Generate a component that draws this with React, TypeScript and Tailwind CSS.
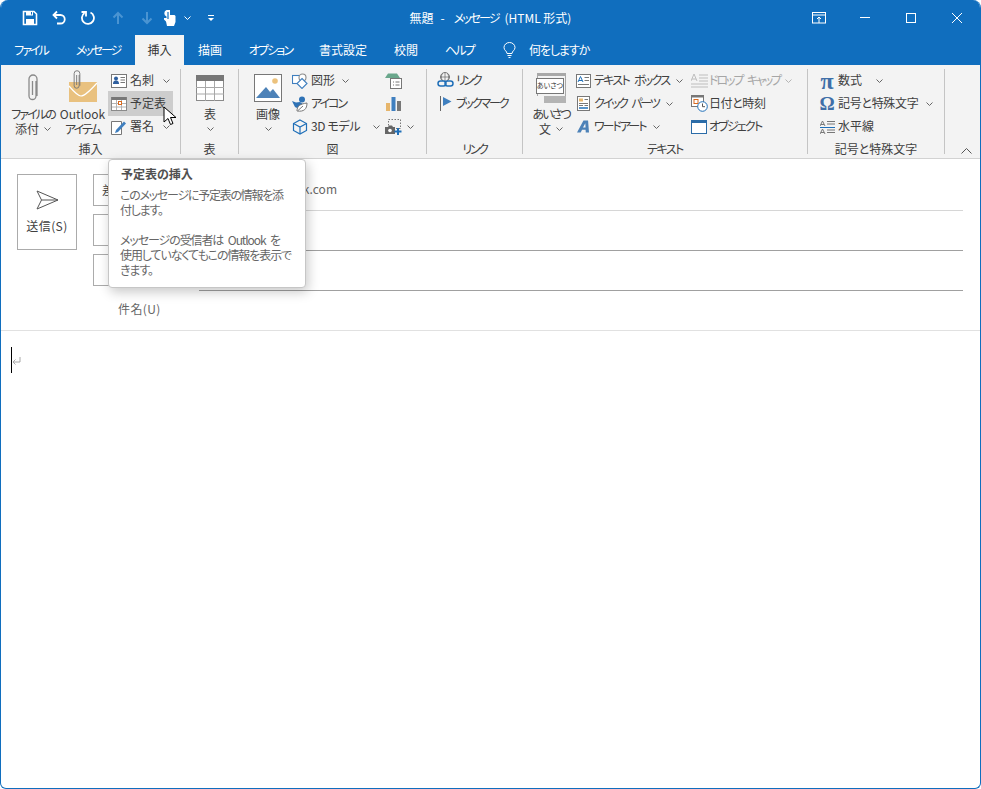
import type { ReactNode } from 'react'

const BLUE = '#106ebe'

function Chevron({ color = '#666' }: { color?: string }) {
  return (
    <svg width="7" height="4" viewBox="0 0 7 4" className="shrink-0">
      <path d="M.5.5 3.5 3.5 6.5.5" fill="none" stroke={color} />
    </svg>
  )
}

// the CJK font's kana run wider than the ribbon's, so they get pulled in
function Kana({ children }: { children: ReactNode }) {
  return <span className="tracking-[-1.9px]">{children}</span>
}

// quick access toolbar icons
function SaveIcon() {
  return (
    <svg width="16" height="16" viewBox="0 0 16 16">
      <path d="M1.5 1.5h10.5l2.5 2.5v10.500h-13z" fill="none" stroke="#fff" strokeWidth="1.6" />
      <rect x="4" y="1.500" width="7" height="4" fill="#fff" />
      <rect x="4" y="9" width="8" height="5" fill="#fff" />
      <rect x="9" y="2" width="1" height="2.500" fill={BLUE} />
    </svg>
  )
}

function UndoIcon() {
  return (
    <svg width="16" height="16" viewBox="0 0 16 16" fill="none" stroke="#fff" strokeWidth="1.8">
      <path d="M6 1.500 2.500 5 6 8.500" />
      <path d="M3 5h6.500a4 4 0 0 1 0 8.500H6" />
    </svg>
  )
}

function RedoIcon() {
  return (
    <svg width="14" height="15" viewBox="0 0 14 15" fill="none" stroke="#fff" strokeWidth="1.8">
      <path d="M3.500 3a6 6 0 1 0 6-.5" />
      <path d="M.5 2h4.500v4.500" />
    </svg>
  )
}

function ArrowIcon({ down }: { down?: boolean }) {
  return (
    <svg width="12" height="14" viewBox="0 0 12 14" fill="none" stroke="#4a94d2" strokeWidth="2" className={down ? 'rotate-180' : ''}>
      <path d="M6 13V2M1.500 6.500 6 2l4.500 4.500" />
    </svg>
  )
}

function TouchIcon() {
  return (
    <svg width="13" height="18" viewBox="0 0 13 18">
      <path d="M3.500 1h3.500v5h4.500l1 1v6l-1.500 4h-7l-1-4.500-2-2V9h2.500V7.500a3.500 3.500 0 0 1 0-6.500z" fill="#fff" />
      <path d="M5 3v7" stroke={BLUE} strokeWidth="1.200" />
    </svg>
  )
}

// ribbon icons
function ClipIcon({ w = 14, h = 28, color = '#8a8a8a' }: { w?: number; h?: number; color?: string }) {
  return (
    <svg width={w} height={h} viewBox="0 0 14 28" fill="none" stroke={color} strokeWidth="1.300">
      <path d="M10 7v15a3.500 3.500 0 0 1-7 0V5a3.800 3.800 0 0 1 8 0v17" />
      <path d="M6.500 7v14" />
    </svg>
  )
}

function EnvelopeIcon() {
  return (
    <div className="relative w-[29px] h-[28px]">
      <svg width="29" height="28" viewBox="0 0 29 28" className="absolute left-0 top-0">
        <rect x="1" y="8" width="28" height="21" fill="#e9c17f" />
        <path d="M1 12c6 7 9 10 12 10s8-4 16-13" fill="none" stroke="#fff" strokeWidth="1.200" />
      </svg>
      <div className="absolute left-[4px] top-[-4px]">
        <ClipIcon w={10} h={20} color="#777" />
      </div>
    </div>
  )
}

function CardIcon() {
  return (
    <svg width="16" height="14" viewBox="0 0 16 14">
      <rect x=".5" y=".5" width="15" height="13" fill="#fff" stroke="#777" />
      <circle cx="5" cy="4.500" r="2" fill="#2f5f9e" />
      <path d="M2 10c0-3 1.500-3.500 3-3.500S8 7 8 10z" fill="#2f5f9e" />
      <path d="M9.500 3.500h4.500M9.500 6h4.500M9.500 8.500h4.500" stroke="#777" />
    </svg>
  )
}

function CalendarIcon() {
  return (
    <svg width="16" height="15" viewBox="0 0 16 15">
      <rect x=".5" y="1.500" width="15" height="13" fill="#fff" stroke="#8a8a8a" />
      <rect x=".5" y="1" width="15" height="3" fill="#777" />
      <path d="M5.500 4v10M10.500 4v10M1 7.500h14M1 11h14" stroke="#b4b4b4" />
      <rect x="7.500" y="5.500" width="3" height="3" fill="#fff" stroke="#d9691e" />
    </svg>
  )
}

function SignIcon() {
  return (
    <svg width="16" height="16" viewBox="0 0 16 16">
      <path d="M.5 2.500h10v13H.5z" fill="#fff" stroke="#777" />
      <path d="M5 11 13 2.500l2 2-8 8.500-3 1z" fill="#3f7fbf" />
    </svg>
  )
}

function TableIcon() {
  return (
    <svg width="28" height="26" viewBox="0 0 28 26">
      <rect x=".5" y=".5" width="27" height="25" fill="#fff" stroke="#8a8a8a" />
      <rect x="0" y="0" width="28" height="6" fill="#777" />
      <path d="M9.500 6v20M18.500 6v20M0 12.500h28M0 19h28" stroke="#a8a8a8" />
    </svg>
  )
}

function PictureIcon() {
  return (
    <svg width="28" height="28" viewBox="0 0 28 28">
      <rect x=".5" y=".5" width="27" height="27" fill="#fff" stroke="#777" />
      <circle cx="21" cy="7" r="2.800" fill="#ecc27d" />
      <path d="M2 24 12 13l9 11z" fill="#4d82b8" />
      <path d="m16 18 3-3 7 9h-7z" fill="#4d82b8" />
    </svg>
  )
}

function ShapesIcon() {
  return (
    <svg width="16" height="16" viewBox="0 0 16 16" fill="#fff" strokeWidth="1.100">
      <rect x=".5" y="2.500" width="9" height="8" stroke="#3f7fbf" />
      <circle cx="10.500" cy="4.500" r="3.500" stroke="#8a8a8a" />
      <path d="m10 5.500 5 5-5 5-5-5z" stroke="#3f7fbf" />
    </svg>
  )
}

function BirdIcon() {
  return (
    <svg width="16" height="16" viewBox="0 0 16 16">
      <circle cx="10" cy="3.500" r="3" fill="#2f72b5" />
      <path d="M0 5l4 1.500L8 6l3 2-4 5-4-2z" fill="#2f72b5" />
      <path d="M5 15c0-5 3-7 10-8 0 6-3 9-10 8z" fill="#fff" stroke="#777" />
      <path d="M6 14.500 11 10" stroke="#777" />
    </svg>
  )
}

function CubeIcon() {
  return (
    <svg width="16" height="16" viewBox="0 0 16 16" fill="none" stroke="#1f6fb8" strokeWidth="1.200">
      <path d="M8 1 14.500 4.500v7L8 15l-6.500-3.500v-7z" />
      <path d="M1.500 4.500 8 8l6.500-3.500M8 8v7" />
    </svg>
  )
}

function SmartArtIcon() {
  return (
    <svg width="17" height="16" viewBox="0 0 17 16">
      <path d="M0 5 3 .5h9l3 4.500z" fill="#6aa78c" />
      <rect x="5.500" y="5.500" width="11" height="10" fill="#fff" stroke="#777" />
      <path d="M8 9h1M8 12h1M10.500 9h4M10.500 12h4" stroke="#777" />
    </svg>
  )
}

function ChartIcon() {
  return (
    <svg width="15" height="14" viewBox="0 0 15 14">
      <rect x="0" y="6" width="4" height="8" fill="#e6b56b" />
      <rect x="5.500" y="0" width="4" height="14" fill="#3f7fbf" />
      <rect x="11" y="4" width="4" height="10" fill="#777" />
    </svg>
  )
}

function ScreenshotIcon() {
  return (
    <svg width="17" height="16" viewBox="0 0 17 16">
      <rect x="3.500" y=".5" width="12" height="9" fill="none" stroke="#777" strokeDasharray="1.500 1.500" />
      <path d="M0 8h3l1-1.500h3L8 8h2v7H0z" fill="#666" />
      <circle cx="5" cy="11.500" r="1.800" fill="#fff" />
      <path d="M13 9v7M9.500 12.500h7" stroke="#1f6fb8" strokeWidth="2" />
    </svg>
  )
}

function LinkIcon() {
  return (
    <svg width="17" height="17" viewBox="0 0 17 17" fill="none">
      <circle cx="8" cy="5" r="4.500" stroke="#777" />
      <path d="M3.500 5h9M8 .5v9M5.500 1.500c-1.500 2-1.500 5 0 7M10.500 1.500c1.500 2 1.500 5 0 7" stroke="#777" strokeWidth=".8" />
      <rect x="1" y="9" width="8" height="5" rx="2.500" stroke="#1f6fb8" strokeWidth="1.500" fill="#f3f3f3" />
      <rect x="8" y="9" width="8" height="5" rx="2.500" stroke="#1f6fb8" strokeWidth="1.500" />
    </svg>
  )
}

function BookmarkIcon() {
  return (
    <svg width="12" height="15" viewBox="0 0 12 15">
      <path d="M.5 0v15" stroke="#666" />
      <path d="M3 1v9l8.500-4.500z" fill="#3f7fbf" />
    </svg>
  )
}

function GreetingIcon() {
  return (
    <div className="relative w-[30px] h-[30px] flex flex-col">
      <div className="h-[3px] ml-[1px] bg-[#a8a8a8]" />
      <div className="h-[20px] border-x border-[#a8a8a8] ml-[1px]" />
      <div className="h-[7px] ml-[8px] bg-[#b4b4b4]" />
      <div className="absolute left-0 top-[5px] w-[28px] h-[16px] bg-white border border-[#777] flex items-center justify-center text-[7px] leading-none text-[#333] whitespace-nowrap">
        あいさつ
      </div>
    </div>
  )
}

function TextBoxIcon() {
  return (
    <svg width="15" height="14" viewBox="0 0 15 14">
      <rect x=".5" y=".5" width="14" height="13" fill="#fff" stroke="#777" />
      <path d="M2 8 4.500 2.500 7 8M3 6.500h3" fill="none" stroke="#1f6fb8" />
      <path d="M8.500 3.500h4.500M8.500 6.500h4.500M2 10.500h11" stroke="#777" />
    </svg>
  )
}

function QuickPartsIcon() {
  return (
    <svg width="13" height="15" viewBox="0 0 13 15">
      <rect x=".5" y=".5" width="12" height="14" fill="#fff" stroke="#777" />
      <rect x="2" y="2.500" width="4" height="3" fill="#e6b56b" />
      <path d="M7.500 3.500h3.500M2 7.500h9M2 9.500h4M7.500 9.500h3.500" stroke="#777" />
      <path d="M2 12h9" stroke="#1f6fb8" strokeWidth="1.500" />
    </svg>
  )
}

function WordArtIcon() {
  return (
    <svg width="12" height="13" viewBox="0 0 13 13">
      <path d="M0 13 7 0h5l1 13H9.500l-.2-3H5.500l-1.500 3zM6.500 7.500h2.800l-.3-4.500z" fill="#4d82b8" fillRule="evenodd" />
    </svg>
  )
}

function DropCapIcon() {
  return (
    <svg width="17" height="16" viewBox="0 0 17 16" stroke="#bdbdbd" fill="none">
      <path d="M0 8 3 1l3 7M1 6h4" />
      <path d="M8 2h9M8 5h9M8 8h9M0 11h17M0 14h17" />
    </svg>
  )
}

function DateTimeIcon() {
  return (
    <svg width="17" height="17" viewBox="0 0 17 17">
      <rect x=".5" y=".5" width="12" height="11" fill="#fff" stroke="#777" />
      <rect x="0" y="0" width="13" height="2.500" fill="#777" />
      <rect x="3" y="4.500" width="4" height="4" fill="none" stroke="#d9691e" />
      <circle cx="11.500" cy="11.500" r="4.800" fill="#fff" stroke="#1f6fb8" />
      <path d="M11.500 8.500v3.200h2.500" fill="none" stroke="#555" />
    </svg>
  )
}

function ObjectIcon() {
  return (
    <svg width="16" height="14" viewBox="0 0 16 14">
      <rect x=".5" y=".5" width="15" height="13" fill="#fff" stroke="#2b6ca8" />
      <rect x="0" y="0" width="16" height="3" fill="#2b6ca8" />
    </svg>
  )
}

function HorizontalLineIcon() {
  return (
    <svg width="15" height="14" viewBox="0 0 15 14" fill="none" stroke="#777">
      <path d="M0 6 2.500 1 5 6M1 4.500h3M7 1.500h8M7 4h8" />
      <path d="M0 7.500h15" stroke="#1f6fb8" />
      <path d="M0 14l2.500-5 2.500 5M1 12.500h3M7 10h8M7 12.500h8" />
    </svg>
  )
}

function SmallButton({
  icon,
  label,
  chevron,
  hot,
  disabled,
  iconWidth = 'w-[16px]',
  gap = 'gap-[3px]',
  chevronGap = 'ml-[6px]',
  track = '',
  className = '',
}: {
  icon?: ReactNode
  label?: string
  chevron?: boolean
  hot?: boolean
  disabled?: boolean
  iconWidth?: string
  gap?: string
  chevronGap?: string
  track?: string
  className?: string
}) {
  return (
    <div
      className={`flex items-center whitespace-nowrap ${gap} ${hot ? 'h-[25px] -my-px bg-[#cdcdcd]' : 'h-[23px]'} ${disabled ? 'text-[#a6a6a6]' : ''} ${className}`}
    >
      <span className={`flex justify-center shrink-0 ${iconWidth}`}>{icon}</span>
      {label && <span className={`pb-[2px] ${track}`}>{label}</span>}
      {chevron && (
        <span className={chevronGap}>
          <Chevron color={disabled ? '#b5b5b5' : '#666'} />
        </span>
      )}
    </div>
  )
}

function BigButton({
  icon,
  lines,
  chevron,
  width,
}: {
  icon: ReactNode
  lines: ReactNode[]
  chevron?: 'inline' | 'below'
  width: string
}) {
  return (
    <div className={`flex flex-col items-center shrink-0 ${width}`}>
      <div className="h-[37px] flex items-center justify-center">{icon}</div>
      {lines.map((line, i) => (
        <div key={i} className="h-[15px] leading-[15px] whitespace-nowrap flex items-center gap-[5px]">
          {line}
          {chevron === 'inline' && i === lines.length - 1 && <Chevron />}
        </div>
      ))}
      {chevron === 'below' && (
        <div className="h-[15px] flex items-center">
          <Chevron />
        </div>
      )}
    </div>
  )
}

function Group({ label, width, children }: { label: ReactNode; width: string; children: ReactNode }) {
  return (
    <div className={`h-[85px] border-r border-[#c4c4c4] shrink-0 ${width}`}>
      <div className="h-[73px] flex">{children}</div>
      <div className="h-[12px] leading-[14px] text-center whitespace-nowrap">{label}</div>
    </div>
  )
}

function Tab({ label, width, active, track = '' }: { label: string; width: string; active?: boolean; track?: string }) {
  return (
    <div
      className={`h-[30px] flex items-center justify-center shrink-0 whitespace-nowrap ${width} ${track} ${active ? 'bg-[#f3f3f3] text-[#333]' : 'text-white'}`}
    >
      {label}
    </div>
  )
}

function AddressButton({ label, first }: { label?: string; first?: boolean }) {
  return (
    <div
      className={`w-[90px] h-[32px] border border-[#ababab] bg-white flex items-center whitespace-nowrap overflow-hidden ${first ? 'pl-[8px]' : 'justify-center'}`}
    >
      {label}
    </div>
  )
}

export default function App() {
  return (
    <div
      className="relative w-[981px] h-[789px] overflow-hidden rounded-t-[8px] rounded-b-[6px] border border-t-0 border-[#106ebe] bg-white text-[12px] text-[#404040] flex flex-col [font-feature-settings:'palt']"
      style={{ fontFamily: '"Noto Sans CJK JP", "Noto Sans", sans-serif' }}
    >
      {/* title bar */}
      <div className="h-[35px] bg-[#106ebe] grid grid-cols-[1fr_auto_1fr] items-center text-white">
        <div className="flex items-center pl-[21px]">
          <div className="w-[29px]"><SaveIcon /></div>
          <div className="w-[30px]"><UndoIcon /></div>
          <div className="w-[30px] "><RedoIcon /></div>
          <div className="w-[29px] pl-[1px]"><ArrowIcon /></div>
          <div className="w-[23px] pl-[1px]"><ArrowIcon down /></div>
          <div className="w-[21px]"><TouchIcon /></div>
          <div className="w-[23px]"><Chevron color="#fff" /></div>
          <div className="flex flex-col items-center gap-[2px] w-[7px]">
            <div className="w-[6px] h-px bg-white" />
            <div className="border-x-[3px] border-t-[3px] border-x-transparent border-t-white" />
          </div>
        </div>
        <div className="flex items-center whitespace-nowrap gap-[7px]">
          <span>無題</span>
          <span className="mr-[2px]">-</span>
          <span className="tracking-[-2px] mr-[-1px]">メッセージ</span>
          <span>(HTML 形式)</span>
        </div>
        <div className="flex justify-end items-center">
          <div className="w-[46px] flex justify-center">
            <svg width="14" height="12" viewBox="0 0 14 12" fill="none" stroke="#fff">
              <rect x=".5" y=".5" width="13" height="10.500" />
              <path d="M1 3h12" />
              <path d="M7 11V5M5 7l2-2 2 2" />
            </svg>
          </div>
          <div className="w-[46px] flex justify-center">
            <div className="w-[10px] h-px bg-white" />
          </div>
          <div className="w-[46px] flex justify-center">
            <div className="w-[10px] h-[10px] border border-white" />
          </div>
          <div className="w-[46px] flex justify-center">
            <svg width="10" height="10" viewBox="0 0 10 10" stroke="#fff">
              <path d="m0 0 10 10M10 0 0 10" />
            </svg>
          </div>
        </div>
      </div>

      {/* tabs */}
      <div className="h-[30px] bg-[#106ebe] flex">
        <Tab label="ファイル" width="w-[60px]" track="tracking-[-2px]" />
        <Tab label="メッセージ" width="w-[74px]" track="tracking-[-2px]" />
        <Tab label="挿入" width="w-[49px]" active />
        <Tab label="描画" width="w-[52px]" />
        <Tab label="オプション" width="w-[69px]" track="tracking-[-1.8px]" />
        <Tab label="書式設定" width="w-[76px]" />
        <Tab label="校閲" width="w-[50px]" />
        <Tab label="ヘルプ" width="w-[57px]" track="tracking-[-1.7px]" />
        <div className="flex items-center text-white gap-[13px] pl-[15px] whitespace-nowrap">
          <svg width="13" height="16" viewBox="0 0 13 16" fill="none" stroke="#fff">
            <path d="M4 11.500C4 9 1 8.500 1 5.500a5.500 5 0 0 1 11 0c0 3-3 3.500-3 6z" />
            <path d="M4.500 13.500h4M5.500 15.500h2" />
          </svg>
          <span className="tracking-[-1.100px]">何をしますか</span>
        </div>
      </div>

      {/* ribbon */}
      <div className="h-[94px] bg-[#f3f3f3] border-b border-[#d2d2d2] pt-[4px] flex relative shrink-0">
        <Group label="挿入" width="w-[180px]">
          <div className="pl-[8px] flex">
            <BigButton width="w-[48px]" icon={<ClipIcon />} lines={[<Kana>ファイルの</Kana>, '添付']} chevron="inline" />
            <BigButton width="w-[51px]" icon={<EnvelopeIcon />} lines={['Outlook', <Kana>アイテム</Kana>]} />
          </div>
          <div className="flex flex-col w-[65px]">
            <SmallButton icon={<CardIcon />} label="名刺" chevron className="pl-[3px]" />
            <SmallButton icon={<CalendarIcon />} label="予定表" hot className="pl-[3px]" />
            <SmallButton icon={<SignIcon />} label="署名" chevron className="pl-[3px]" />
          </div>
        </Group>

        <Group label="表" width="w-[58px]">
          <BigButton width="w-[58px]" icon={<TableIcon />} lines={['表']} chevron="below" />
        </Group>

        <Group label="図" width="w-[188px]">
          <BigButton width="w-[58px]" icon={<PictureIcon />} lines={['画像']} chevron="below" />
          <div className="flex flex-col w-[89px] -ml-[5px]">
            <SmallButton icon={<ShapesIcon />} label="図形" chevron chevronGap="ml-[4px]" />
            <SmallButton icon={<BirdIcon />} label="アイコン" track="tracking-[-2px]" />
            <SmallButton icon={<CubeIcon />} label="3D モデル" chevron chevronGap="ml-[10px]" track="tracking-[-0.4px]" />
          </div>
          <div className="flex flex-col pl-[3px]">
            <SmallButton icon={<SmartArtIcon />} iconWidth="w-[18px]" />
            <SmallButton icon={<ChartIcon />} iconWidth="w-[18px]" />
            <SmallButton icon={<ScreenshotIcon />} iconWidth="w-[18px]" chevron chevronGap="ml-[2px]" />
          </div>
        </Group>

        <Group label={<span className="tracking-[-2.300px]">リンク</span>} width="w-[96px]">
          <div className="flex flex-col pl-[10px]">
            <SmallButton icon={<LinkIcon />} label="リンク" iconWidth="w-[17px]" gap="gap-[2px]" track="tracking-[-2.300px]" />
            <SmallButton icon={<BookmarkIcon />} label="ブックマーク" iconWidth="w-[17px]" gap="gap-[2px]" track="tracking-[-2.100px]" />
          </div>
        </Group>

        <Group label={<span className="tracking-[-1.500px]">テキスト</span>} width="w-[285px]">
          <BigButton width="w-[56px]" icon={<GreetingIcon />} lines={[<Kana>あいさつ</Kana>, '文']} chevron="inline" />
          <div className="flex flex-col w-[115px] -ml-[4px]">
            <SmallButton icon={<TextBoxIcon />} label="テキスト ボックス" chevron chevronGap="ml-[4px]" track="tracking-[-1.700px] [word-spacing:4px]" />
            <SmallButton icon={<QuickPartsIcon />} label="クイック パーツ" chevron chevronGap="ml-[4px]" track="tracking-[-2.200px] [word-spacing:4px]" />
            <SmallButton icon={<WordArtIcon />} label="ワードアート" chevron chevronGap="ml-[4px]" track="tracking-[-2px]" />
          </div>
          <div className="flex flex-col">
            <SmallButton icon={<DropCapIcon />} label="ドロップ キャップ" chevron disabled chevronGap="ml-[4px]" iconWidth="w-[18px]" gap="gap-[1px]" track="tracking-[-2.100px] [word-spacing:4px]" />
            <SmallButton icon={<DateTimeIcon />} label="日付と時刻" iconWidth="w-[18px]" gap="gap-[1px]" track="tracking-[-0.4px]" />
            <SmallButton icon={<ObjectIcon />} label="オブジェクト" iconWidth="w-[18px]" gap="gap-[1px]" track="tracking-[-1.800px]" />
          </div>
        </Group>

        <Group label="記号と特殊文字" width="w-[137px]">
          <div className="flex flex-col pl-[11px]">
            <SmallButton
              icon={<span className="text-[24px] leading-none font-bold text-[#3f6fa8] [font-family:'Liberation_Serif',serif]">π</span>}
              label="数式"
              chevron
              chevronGap="ml-[11px]"
            />
            <SmallButton
              icon={<span className="text-[19px] leading-none font-bold text-[#3f6fa8] [font-family:'Liberation_Serif',serif]">Ω</span>}
              label="記号と特殊文字"
              chevron
              chevronGap="ml-[5px]"
              track="tracking-[-0.3px]"
            />
            <SmallButton icon={<HorizontalLineIcon />} label="水平線" />
          </div>
        </Group>

        <svg width="11" height="6" viewBox="0 0 11 6" className="absolute right-[8px] bottom-[4px]">
          <path d="M.5 5.500 5.500.5l5 5" fill="none" stroke="#555" />
        </svg>
      </div>

      {/* compose header */}
      <div className="flex shrink-0">
        <div className="pl-[16px] pt-[15px] w-[92px] shrink-0">
          <div className="w-[60px] h-[76px] border border-[#ababab] flex flex-col items-center pt-[15px] gap-[7px]">
            <svg width="23" height="20" viewBox="0 0 23 20" fill="none" stroke="#555">
              <path d="M1 1 22 10 1 19 5.500 10zM5.500 10H22" />
            </svg>
            <span className="whitespace-nowrap tracking-[0.4px]">送信(S)</span>
          </div>
        </div>
        <div className="flex-1 pr-[17px]">
          <div className="h-[52px] flex items-start pt-[15px]">
            <AddressButton label="差出人(M)" first />
            <div className="flex-1 ml-[16px] h-[37px] border-b border-[#d6d6d6] text-[#666] pl-[12px] leading-[30px] text-right pr-[626px]">
              user@outlook.com
            </div>
          </div>
          <div className="h-[40px] flex items-start pt-[3px]">
            <AddressButton label="宛先" />
            <div className="flex-1 ml-[16px] h-[37px] border-b border-[#a0a0a0]" />
          </div>
          <div className="h-[40px] flex items-start pt-[3px]">
            <AddressButton label="CC" />
            <div className="flex-1 ml-[16px] h-[37px] border-b border-[#a0a0a0]" />
          </div>
          <div className="h-[39px] flex items-center pb-[3px] pl-[25px] text-[#666] tracking-[0.4px]">件名(U)</div>
        </div>
      </div>

      {/* message body */}
      <div className="flex-1 border-t border-[#e1e1e1] pl-[10px] pt-[16px]">
        <div className="flex">
          <div className="w-px h-[26px] bg-black" />
          <svg width="9" height="9" viewBox="0 0 9 9" fill="none" stroke="#a8a8a8" className="mt-[10px]">
            <path d="M8 0v5H1M3.500 2.500 1 5l2.500 2.500" />
          </svg>
        </div>
      </div>

      {/* hover cursor */}
      <svg width="14" height="20" viewBox="0 0 14 20" className="absolute left-[162px] top-[106px]">
        <path d="M1 1v15l4-3.500 2.500 6 2.500-1-2.500-6H13z" fill="#fff" stroke="#000" />
      </svg>

      {/* tooltip */}
      <div className="absolute left-[107px] top-[159px] w-[198px] h-[129px] rounded-[4px] border border-[#c6c6c6] bg-white shadow-[2px_4px_12px_rgba(0,0,0,0.22)] pl-[12px] pt-[6px] text-[#666] leading-[15px] whitespace-nowrap">
        <div className="font-bold text-[#505050] h-[21px] leading-[15px]">予定表の挿入</div>
        <div className="-ml-px tracking-[-1.250px]">このメッセージに予定表の情報を添</div>
        <div className="-ml-px tracking-[-1.250px]">付します。</div>
        <div className="-ml-px mt-[15px] tracking-[-1.100px] [word-spacing:3px]">メッセージの受信者は Outlook を</div>
        <div className="-ml-px tracking-[-1.100px]">使用していなくてもこの情報を表示で</div>
        <div className="-ml-px tracking-[-1.100px]">きます。</div>
      </div>
    </div>
  )
}
